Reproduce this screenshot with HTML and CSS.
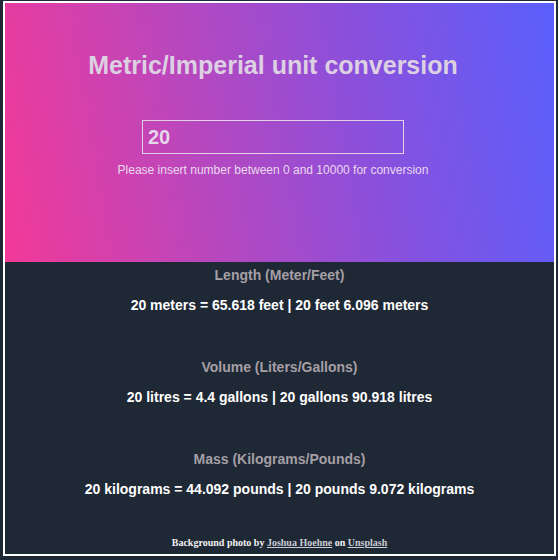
FILE: index.html
```html
<!DOCTYPE html>
<html>
<head>
<meta charset="utf-8">
<link rel="stylesheet" href="styles.css">
</head>
<body>
<div class="frame">
  <header class="hero">
    <h1 class="title">Metric/Imperial unit conversion</h1>
    <input class="num-input" type="text" value="20">
    <p class="hint">Please insert number between 0 and 10000 for conversion</p>
  </header>
  <main class="results">
    <section class="group">
      <h2 class="group-title">Length (Meter/Feet)</h2>
      <p class="group-value">20 meters = 65.618 feet | 20 feet 6.096 meters</p>
    </section>
    <section class="group">
      <h2 class="group-title">Volume (Liters/Gallons)</h2>
      <p class="group-value">20 litres = 4.4 gallons | 20 gallons 90.918 litres</p>
    </section>
    <section class="group">
      <h2 class="group-title">Mass (Kilograms/Pounds)</h2>
      <p class="group-value">20 kilograms = 44.092 pounds | 20 pounds 9.072 kilograms</p>
    </section>
  </main>
  <footer class="credit">Background photo by <a href="#">Joshua Hoehne</a> on <a href="#">Unsplash</a></footer>
</div>
</body>
</html>
```
FILE: styles.css
```css
html, body {
  margin: 0;
  padding: 0;
  background: #1f2835;
  height: 560px;
  overflow: hidden;
}
body {
  font-family: "Liberation Sans", Arial, sans-serif;
}
.frame {
  margin: 1px 2px 0 3px;
  width: 549px;
  height: 551px;
  border: 2px solid #ffffff;
  background: #1f2835;
  display: flex;
  flex-direction: column;
}
.hero {
  height: 259px;
  box-sizing: border-box;
  padding: 48px 13px 0 0;
  display: flex;
  flex-direction: column;
  align-items: center;
  background: linear-gradient(80deg, #f23998 0%, #b947bd 35%, #8a50dc 65%, #5a5ffc 100%);
}
.title {
  margin: 0;
  font-size: 25px;
  line-height: 29px;
  font-weight: bold;
  color: #dcd0e2;
}
.num-input {
  margin-top: 40px;
  width: 262px;
  height: 34px;
  box-sizing: border-box;
  border: 1px solid #e3cfe6;
  background: transparent;
  padding: 0 5px;
  font-family: "Liberation Sans", Arial, sans-serif;
  font-size: 20px;
  font-weight: bold;
  color: #e6d6ec;
  outline: none;
}
.hint {
  margin: 9px 0 0;
  font-size: 12px;
  line-height: 14px;
  color: #ead9ee;
}
.results {
  display: flex;
  flex-direction: column;
  align-items: center;
  gap: 46px;
  padding-top: 5px;
}
.group {
  display: flex;
  flex-direction: column;
  align-items: center;
  gap: 14px;
}
.group-title {
  margin: 0;
  font-size: 14px;
  line-height: 16px;
  font-weight: bold;
  color: #a59fa6;
}
.group-value {
  margin: 0;
  font-size: 14px;
  line-height: 16px;
  font-weight: bold;
  color: #ffffff;
}
.credit {
  margin-top: auto;
  margin-bottom: 5px;
  text-align: center;
  font-family: "Liberation Serif", "Times New Roman", serif;
  font-size: 10px;
  line-height: 12px;
  font-weight: bold;
  color: #f2f2f2;
}
.credit a {
  color: #c9ccd4;
  text-decoration: underline;
}
```
